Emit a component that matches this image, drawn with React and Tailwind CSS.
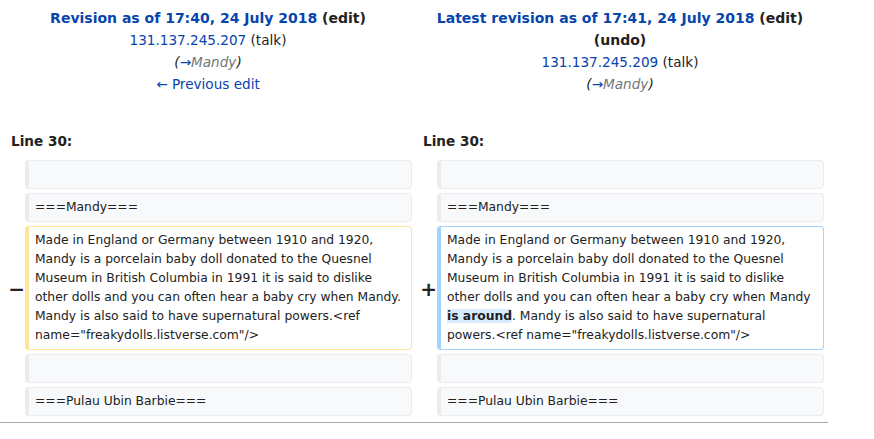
import React from "react";

const blue = "text-[#0645ad]";

const ContextCell = ({ children }) => (
  <div className="min-h-[29px] rounded-[4px] border border-l-4 border-[#eaecf0] bg-[#f8f9fa] px-[6px] py-[4px] text-[12.32px] leading-[19px] text-[#222]">
    {children}
  </div>
);

const Marker = ({ children }) => (
  <div className="flex items-center justify-end pt-[1px] text-[20px] font-bold leading-none text-[#222]">
    <span className="-mr-[4px]">{children}</span>
  </div>
);

const App = () => {
  return (
    <div
      className="w-[828px] border-b border-[#a2a9b1] bg-white pb-[2px] text-[#222]"
      style={{ fontFamily: '"DejaVu Sans", Verdana, sans-serif' }}
    >
      <div className="grid grid-cols-[17px_387px_17px_387px] gap-[4px] p-[4px]">
        {/* Header, old revision */}
        <div className="col-span-2 pt-[3px] text-center text-[13.6px] leading-[22px]">
          <div className="text-[14px] font-bold">
            <span className={blue}>Revision as of 17:40, 24 July 2018</span> (edit)
          </div>
          <div>
            <span className={blue}>131.137.245.207</span> (talk)
          </div>
          <div className="italic">
            (<span className={blue}>→</span>
            <span className="text-[#72777d]">Mandy</span>)
          </div>
          <div className={blue}>← Previous edit</div>
        </div>

        {/* Header, new revision */}
        <div className="col-span-2 pt-[3px] text-center text-[13.6px] leading-[22px]">
          <div className="text-[14px] font-bold">
            <span className={blue}>Latest revision as of 17:41, 24 July 2018</span> (edit)
          </div>
          <div className="text-[14px] font-bold">(undo)</div>
          <div>
            <span className={blue}>131.137.245.209</span> (talk)
          </div>
          <div className="italic">
            (<span className={blue}>→</span>
            <span className="text-[#72777d]">Mandy</span>)
          </div>
        </div>

        {/* Line numbers */}
        <div className="col-span-2 mt-[31px] mb-[4px] pl-[7px] text-[13.6px] font-bold leading-[22px]">
          Line 30:
        </div>
        <div className="col-span-2 mt-[31px] mb-[4px] pl-[7px] text-[13.6px] font-bold leading-[22px]">
          Line 30:
        </div>

        {/* Empty context */}
        <div />
        <ContextCell />
        <div />
        <ContextCell />

        {/* Heading context */}
        <div />
        <ContextCell>===Mandy===</ContextCell>
        <div />
        <ContextCell>===Mandy===</ContextCell>

        {/* Changed paragraph */}
        <Marker>−</Marker>
        <div className="overflow-hidden rounded-[4px] border border-l-4 border-[#ffe49c] bg-white px-[6px] py-[4px] text-[12.32px] leading-[19px] text-[#222]">
          Made in England or Germany between 1910 and 1920, Mandy is a porcelain baby doll
          donated to the Quesnel Museum in British Columbia in 1991 it is said to dislike
          other dolls and you can often hear a baby cry when Mandy. Mandy is also said to have
          supernatural powers.&lt;ref name="freakydolls.listverse.com"/&gt;
        </div>
        <Marker>+</Marker>
        <div className="rounded-[4px] border border-l-4 border-[#a3d3ff] bg-white px-[6px] py-[4px] text-[12.32px] leading-[19px] text-[#222]">
          Made in England or Germany between 1910 and 1920, Mandy is a porcelain baby doll
          donated to the Quesnel Museum in British Columbia in 1991 it is said to dislike
          other dolls and you can often hear a baby cry when Mandy
          <span className="rounded-[3px] bg-[#d8ecff] font-bold"> is around</span>. Mandy is
          also said to have supernatural powers.&lt;ref name="freakydolls.listverse.com"/&gt;
        </div>

        {/* Empty context */}
        <div />
        <ContextCell />
        <div />
        <ContextCell />

        {/* Next heading */}
        <div />
        <ContextCell>===Pulau Ubin Barbie===</ContextCell>
        <div />
        <ContextCell>===Pulau Ubin Barbie===</ContextCell>
      </div>
    </div>
  );
};

export default App;
